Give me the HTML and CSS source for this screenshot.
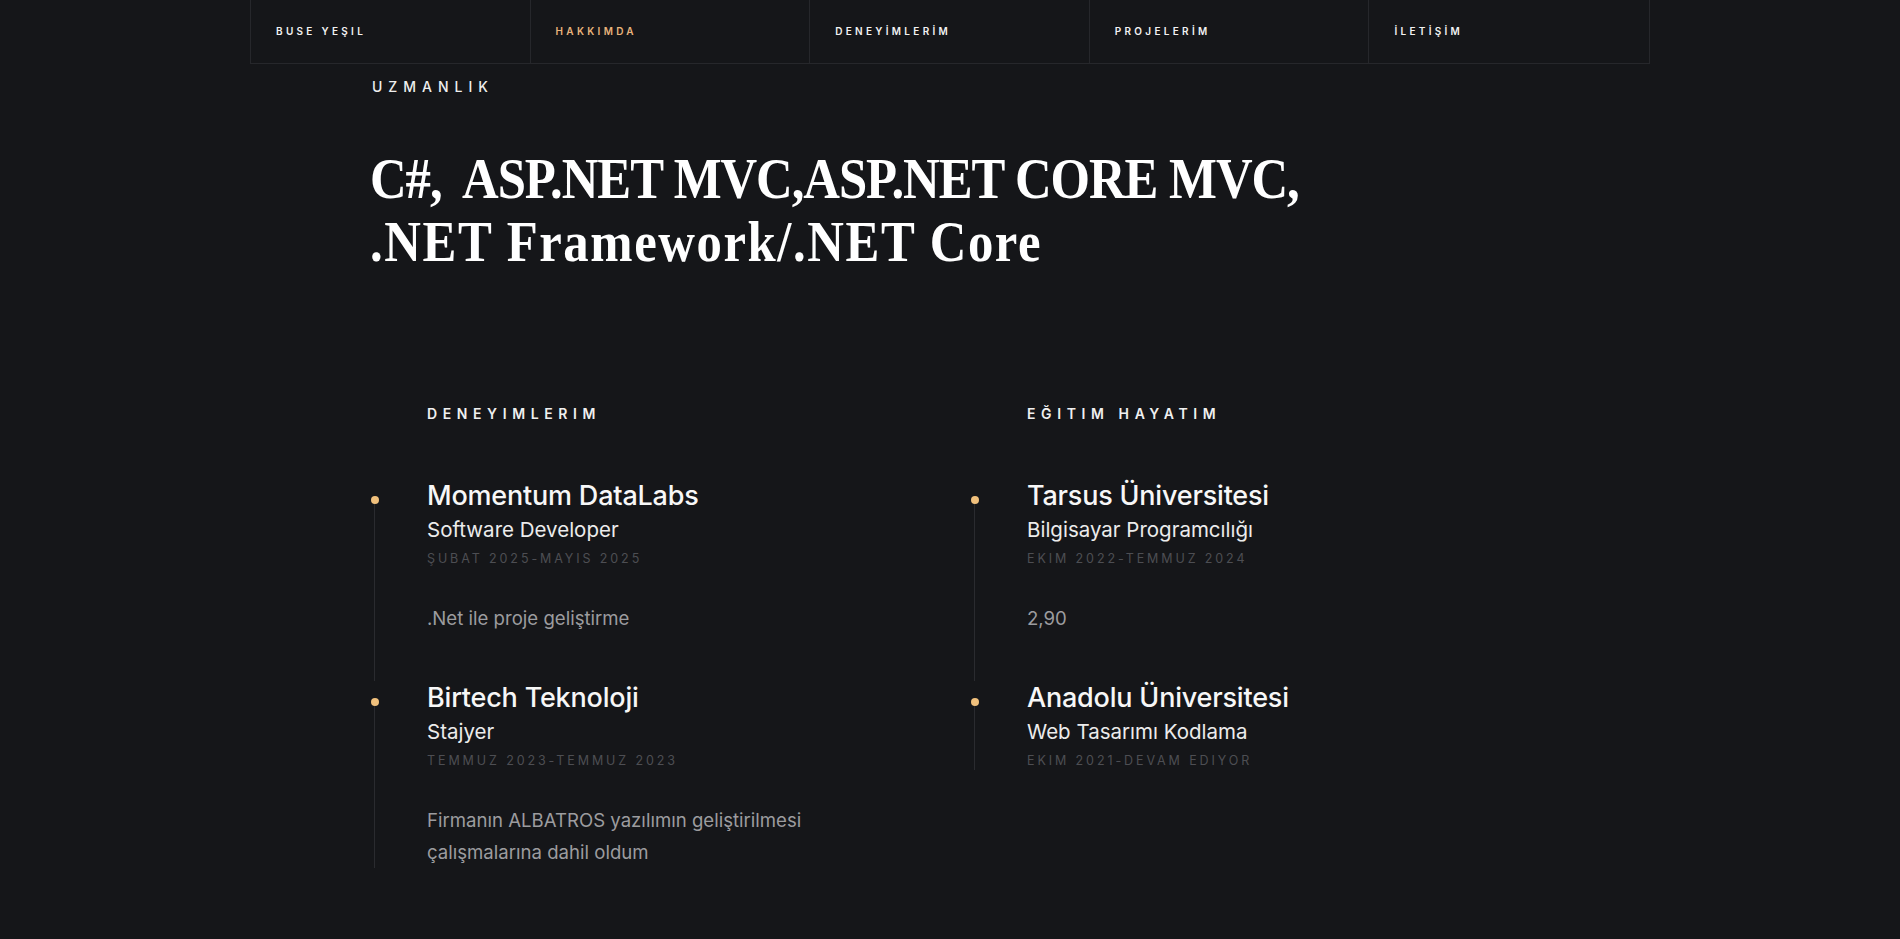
FILE: index.html
```html
<!DOCTYPE html>
<html lang="tr">
<head>
<meta charset="utf-8">
<title>Buse Yeşil</title>
<link rel="stylesheet" href="styles.css">
</head>
<body>
<nav class="topnav">
  <a class="nav-item" href="#">BUSE YEŞIL</a>
  <a class="nav-item active" href="#">HAKKIMDA</a>
  <a class="nav-item" href="#">DENEYİMLERİM</a>
  <a class="nav-item" href="#">PROJELERİM</a>
  <a class="nav-item" href="#">İLETİŞİM</a>
</nav>
<main class="page">
  <section class="expertise">
    <p class="eyebrow">UZMANLIK</p>
    <h1 class="headline"><span class="hl-line">C#,&nbsp; ASP.NET MVC,ASP.NET CORE MVC,</span><span class="hl-line hl-wide">.NET Framework/.NET Core</span></h1>
  </section>
  <section class="columns">
    <div class="column">
      <h2 class="col-title">DENEYIMLERIM</h2>
      <ul class="timeline">
        <li class="entry">
          <h3 class="entry-name">Momentum DataLabs</h3>
          <p class="entry-role">Software Developer</p>
          <p class="entry-date">ŞUBAT 2025-MAYIS 2025</p>
          <p class="entry-desc">.Net ile proje geliştirme</p>
        </li>
        <li class="entry">
          <h3 class="entry-name">Birtech Teknoloji</h3>
          <p class="entry-role">Stajyer</p>
          <p class="entry-date">TEMMUZ 2023-TEMMUZ 2023</p>
          <p class="entry-desc">Firmanın ALBATROS yazılımın geliştirilmesi<br>çalışmalarına dahil oldum</p>
        </li>
      </ul>
    </div>
    <div class="column">
      <h2 class="col-title">EĞITIM HAYATIM</h2>
      <ul class="timeline">
        <li class="entry">
          <h3 class="entry-name">Tarsus Üniversitesi</h3>
          <p class="entry-role">Bilgisayar Programcılığı</p>
          <p class="entry-date">EKIM 2022-TEMMUZ 2024</p>
          <p class="entry-desc">2,90</p>
        </li>
        <li class="entry">
          <h3 class="entry-name">Anadolu Üniversitesi</h3>
          <p class="entry-role">Web Tasarımı Kodlama</p>
          <p class="entry-date">EKIM 2021-DEVAM EDIYOR</p>
        </li>
      </ul>
    </div>
  </section>
</main>
</body>
</html>
```
FILE: styles.css
```css
* { box-sizing: border-box; }

html, body {
  margin: 0;
  padding: 0;
  background: #151619;
  color: #f4f4f4;
  font-family: Inter, "Noto Sans", sans-serif;
}

.topnav {
  width: 1400px;
  height: 64px;
  margin: 0 auto;
  display: grid;
  grid-template-columns: repeat(5, 1fr);
  border: 1px solid #26272b;
  border-top: none;
}

.nav-item {
  display: flex;
  align-items: center;
  padding: 0 0 2px 25px;
  border-right: 1px solid #26272b;
  color: #f2f2f2;
  text-decoration: none;
  font-size: 10px;
  font-weight: 600;
  letter-spacing: 3.3px;
}

.nav-item:last-child { border-right: none; }

.nav-item.active { color: #e9b47c; }

.page {
  width: 1160px;
  margin: 0 auto;
}

.expertise {
  padding-top: 13px;
}

.eyebrow {
  margin: 0;
  padding-left: 2px;
  font-size: 14px;
  line-height: 20px;
  font-weight: 500;
  letter-spacing: 6px;
  color: #eeeeee;
}

.headline {
  margin: 50px 0 0;
  font-family: "Liberation Serif", "DejaVu Serif", serif;
  font-weight: 700;
  font-size: 58px;
  line-height: 63px;
  color: #ffffff;
  transform: scaleX(0.875);
  transform-origin: left center;
  white-space: nowrap;
}

.hl-line {
  display: block;
  letter-spacing: -1.2px;
}

.hl-line.hl-wide {
  letter-spacing: 1.8px;
}

.columns {
  display: grid;
  grid-template-columns: 600px 560px;
  margin-top: 131px;
}

.col-title {
  margin: 0 0 55px 57px;
  font-size: 14px;
  line-height: 20px;
  font-weight: 600;
  letter-spacing: 5.6px;
  color: #f0f0f0;
}

.timeline {
  list-style: none;
  margin: 0;
  padding: 0;
}

.entry {
  position: relative;
  padding: 0 0 47px 57px;
}

.entry:last-child { padding-bottom: 0; }

.entry::before {
  content: "";
  position: absolute;
  left: 1px;
  top: 17px;
  width: 8px;
  height: 8px;
  border-radius: 50%;
  background: #f0c07c;
  z-index: 1;
}

.entry::after {
  content: "";
  position: absolute;
  left: 4px;
  top: 21px;
  bottom: 0;
  width: 1px;
  background: #2a2b2f;
}

.entry-name {
  margin: 0;
  font-size: 27px;
  line-height: 34px;
  font-weight: 500;
  color: #f7f7f7;
  letter-spacing: -0.2px;
}

.entry-role {
  margin: 3px 0 0;
  font-size: 20.5px;
  line-height: 28px;
  font-weight: 400;
  color: #ececec;
}

.entry-date {
  margin: 6px 0 0;
  font-size: 12.5px;
  line-height: 18px;
  letter-spacing: 2.9px;
  color: #4d4e53;
}

.entry-desc {
  margin: 34px 0 0;
  font-size: 18.6px;
  line-height: 32px;
  color: #9c9c9f;
}
```
